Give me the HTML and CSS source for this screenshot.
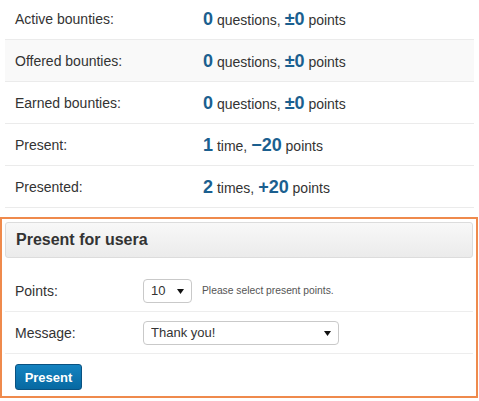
FILE: index.html
```html
<!DOCTYPE html>
<html lang="en">
<head>
<meta charset="utf-8">
<title>Bounties</title>
<link rel="stylesheet" href="styles.css">
</head>
<body>
<div class="stats">
  <div class="stat-row"><span class="stat-label">Active bounties:</span><span class="stat-value"><b>0</b> questions, <b>±0</b> points</span></div>
  <div class="stat-row stat-row-alt"><span class="stat-label">Offered bounties:</span><span class="stat-value"><b>0</b> questions, <b>±0</b> points</span></div>
  <div class="stat-row"><span class="stat-label">Earned bounties:</span><span class="stat-value"><b>0</b> questions, <b>±0</b> points</span></div>
  <div class="stat-row"><span class="stat-label">Present:</span><span class="stat-value"><b>1</b> time, <b>−20</b> points</span></div>
  <div class="stat-row"><span class="stat-label">Presented:</span><span class="stat-value"><b>2</b> times, <b>+20</b> points</span></div>
</div>

<section class="present-box">
  <h2 class="present-head">Present for usera</h2>
  <form class="present-form">
    <div class="form-row">
      <label class="form-label" for="points">Points:</label>
      <div class="form-field">
        <span class="select select-sm">
          <select id="points"><option>10</option><option>20</option><option>50</option></select>
          <svg class="select-arrow" width="7" height="5" viewBox="0 0 7 5"><path d="M0 0h7L3.5 5z" fill="#111"/></svg>
        </span>
        <span class="hint">Please select present points.</span>
      </div>
    </div>
    <div class="form-row">
      <label class="form-label" for="message">Message:</label>
      <div class="form-field">
        <span class="select select-lg">
          <select id="message"><option>Thank you!</option></select>
          <svg class="select-arrow" width="7" height="5" viewBox="0 0 7 5"><path d="M0 0h7L3.5 5z" fill="#111"/></svg>
        </span>
      </div>
    </div>
    <div class="form-actions">
      <button type="button" class="btn-primary">Present</button>
    </div>
  </form>
</section>
</body>
</html>
```

FILE: styles.css
```css
html, body {
  margin: 0;
  padding: 0;
  background: #fff;
}

body {
  font-family: "Liberation Sans", Arial, sans-serif;
  font-size: 14px;
  color: #333;
  width: 479px;
  overflow: hidden;
}

/* bounty summary */
.stats {
  margin: -2px 5px 0;
}

.stat-row {
  display: grid;
  grid-template-columns: 188px 1fr;
  align-items: center;
  height: 42px;
  box-sizing: border-box;
  padding-top: 1px;
  border-bottom: 1px solid #ebebeb;
}

.stat-row-alt {
  background: #f9f9f9;
}

.stat-label,
.stat-value {
  padding: 0 10px;
}

.stat-value b {
  font-size: 18px;
  font-weight: bold;
  color: #1b5f8f;
}

/* present panel */
.present-box {
  margin: 9px 1px 0 0;
  border: 2px solid #ef8a4c;
  padding: 3px 3px 0;
}

.present-head {
  margin: 0;
  height: 36px;
  box-sizing: border-box;
  display: flex;
  align-items: center;
  padding-left: 10px;
  border: 1px solid #dcdcdc;
  border-radius: 3px;
  background: linear-gradient(#f8f8f8, #ebebeb);
  font-size: 16px;
  font-weight: bold;
  color: #333;
}

.present-form {
  margin-top: 12px;
}

.form-row {
  display: grid;
  grid-template-columns: 128px 1fr;
  align-items: center;
  height: 42px;
  box-sizing: border-box;
  padding-left: 10px;
  border-bottom: 1px solid #ededed;
}

.form-field {
  display: flex;
  align-items: center;
}

.select {
  position: relative;
  display: inline-block;
}

.select select {
  appearance: none;
  -webkit-appearance: none;
  display: block;
  height: 24px;
  box-sizing: border-box;
  margin: 0;
  padding: 0 7px;
  border: 1px solid #c9c9c9;
  border-radius: 4px;
  background: #fff;
  font-family: "Liberation Sans", Arial, sans-serif;
  font-size: 13px;
  color: #333;
}

.select-sm select {
  width: 49px;
}

.select-lg select {
  width: 196px;
}

.select-arrow {
  position: absolute;
  right: 8px;
  top: 10px;
  pointer-events: none;
}

.hint {
  margin-left: 10px;
  font-size: 10.3px;
  color: #555;
}

.form-actions {
  padding: 10px 10px 6px;
}

.btn-primary {
  display: block;
  width: 67px;
  height: 26px;
  margin: 0;
  padding: 0;
  border: 1px solid #0a5281;
  border-radius: 3px;
  background: linear-gradient(#1583c0, #0769a2);
  font-family: "Liberation Sans", Arial, sans-serif;
  font-size: 13px;
  font-weight: bold;
  color: #fff;
}
```
